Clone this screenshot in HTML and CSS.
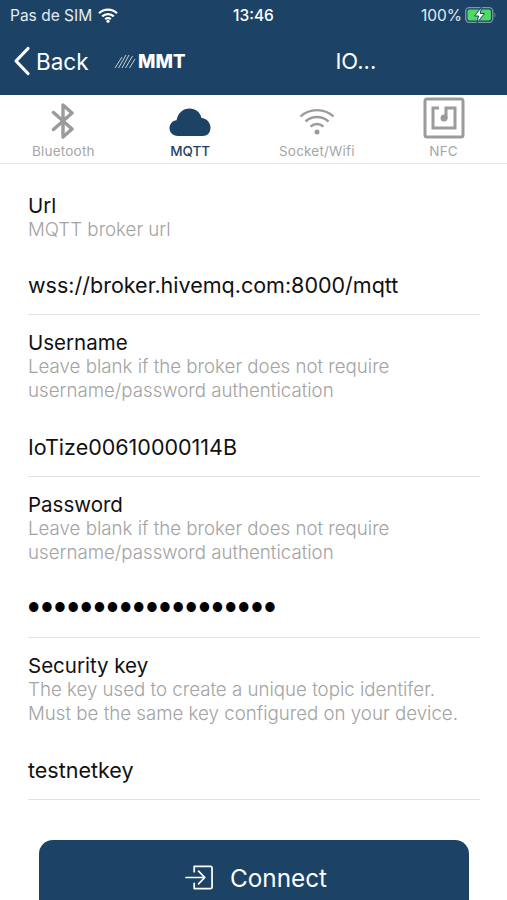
FILE: index.html
```html
<!DOCTYPE html>
<html lang="fr">
<head>
<meta charset="UTF-8">
<meta name="viewport" content="width=device-width, initial-scale=1.0">
<title>MQTT settings</title>
<link rel="stylesheet" href="styles.css">
</head>
<body>

<div class="top">
  <div class="status">
    <div class="status-left">
      <span>Pas de SIM</span>
      <svg class="status-wifi" viewBox="0 0 20 15" width="20" height="15">
        <path d="M1 5.2a13 13 0 0 1 18 0M4.2 8.4a8.4 8.4 0 0 1 11.6 0M7.2 11.2a4 4 0 0 1 5.6 0" fill="none" stroke="#fff" stroke-width="2.2"/>
        <circle cx="10" cy="13.2" r="1.6" fill="#fff"/>
      </svg>
    </div>
    <span class="status-time">13:46</span>
    <div class="status-right">
      <span>100%</span>
      <svg viewBox="0 0 32 16" width="32" height="16">
        <rect x="0.7" y="0.7" width="27" height="14.6" rx="3.5" fill="none" stroke="#7f97a8" stroke-width="1.3"/>
        <rect x="2.5" y="2.5" width="23.4" height="11" rx="2" fill="#4cd964"/>
        <path d="M29.5 5.5c1.2.4 1.2 4.6 0 5z" fill="#7f97a8"/>
        <path d="M16.5 0 9.5 9h4L12 16l7.500-9.500h-4.200z" fill="#fff" stroke="#1c4366" stroke-width="1"/>
      </svg>
    </div>
  </div>
  <div class="navbar">
    <a class="back">
      <svg viewBox="0 0 18 30" width="18" height="30">
        <path d="M15 2.500 3 15l12 12.500" fill="none" stroke="#fff" stroke-width="3.200" stroke-linecap="round" stroke-linejoin="round"/>
      </svg>
      <span>Back</span>
    </a>
    <div class="logo">
      <svg viewBox="0 0 22 16" width="22" height="16">
        <path d="M1 15 8 4M4.500 15 12 2M8 15 15 2M11.500 15 18.500 3M15.500 15 21 6" fill="none" stroke="#c5d2dc" stroke-width="1"/>
      </svg>
      <span>MMT</span>
    </div>
    <div class="nav-title">IO...</div>
  </div>
</div>

<div class="tabs">
  <div class="tab">
    <svg viewBox="0 0 24 36" width="24" height="36">
      <path d="M2.500 9.500 21 26 12 34V2L21 10 2.500 26.500" fill="none" stroke="#9b9b9b" stroke-width="3.400" stroke-linejoin="round" stroke-linecap="round"/>
    </svg>
    <span>Bluetooth</span>
  </div>
  <div class="tab active">
    <svg viewBox="0 0 42 36" width="42" height="36">
      <path d="M9 33C3.500 33 .5 29 .5 25c0-4 3-7.500 7-7.800C9 10 14 5.500 20.500 5.500c6 0 10.500 3.500 12 9.500 5 .3 9 4.500 9 9.500 0 5-3 8.500-8 8.500z" fill="#1c4366"/>
    </svg>
    <span>MQTT</span>
  </div>
  <div class="tab">
    <svg viewBox="0 0 36 36" width="36" height="36">
      <path d="M1.500 13.500C10.500 5 25.500 5 34.500 13.500M6.500 18.500C13 12.500 23 12.500 29.500 18.500M11.500 23.500C15.500 20.500 20.500 20.500 24.500 23.500" fill="none" stroke="#9b9b9b" stroke-width="2.400"/>
      <circle cx="18" cy="29" r="2.500" fill="#9b9b9b"/>
    </svg>
    <span>Socket/Wifi</span>
  </div>
  <div class="tab">
    <svg viewBox="0 0 42 42" width="42" height="42">
      <rect x="2" y="2" width="38" height="38" rx="2" fill="none" stroke="#9b9b9b" stroke-width="3"/>
      <path d="M16 11h-6v20h22V11h-9v11" fill="none" stroke="#9b9b9b" stroke-width="3"/>
      <circle cx="21" cy="21" r="3.500" fill="#9b9b9b"/>
    </svg>
    <span>NFC</span>
  </div>
</div>

<div class="form">
  <div class="field">
    <div class="label">Url</div>
    <div class="hint">MQTT broker url</div>
    <div class="value">wss://broker.hivemq.com:8000/mqtt</div>
  </div>
  <div class="field">
    <div class="label">Username</div>
    <div class="hint">Leave blank if the broker does not require username/password authentication</div>
    <div class="value">IoTize00610000114B</div>
  </div>
  <div class="field">
    <div class="label">Password</div>
    <div class="hint">Leave blank if the broker does not require username/password authentication</div>
    <div class="value dots">&#9679;&#9679;&#9679;&#9679;&#9679;&#9679;&#9679;&#9679;&#9679;&#9679;&#9679;&#9679;&#9679;&#9679;&#9679;&#9679;&#9679;&#9679;&#9679;</div>
  </div>
  <div class="field">
    <div class="label">Security key</div>
    <div class="hint">The key used to create a unique topic identifer.<br>Must be the same key configured on your device.</div>
    <div class="value">testnetkey</div>
  </div>
</div>

<button class="connect">
  <svg viewBox="0 0 30 28" width="29" height="27">
    <path d="M9.500 8V2.500h17a1.500 1.500 0 0 1 1.500 1.500v20a1.500 1.500 0 0 1-1.500 1.500h-17V20" fill="none" stroke="#fff" stroke-width="1.800" stroke-linecap="round" stroke-linejoin="round"/>
    <path d="M1 14h19M14 7.500l6.500 6.500-6.500 6.500" fill="none" stroke="#fff" stroke-width="1.800" stroke-linecap="round" stroke-linejoin="round"/>
  </svg>
  <span>Connect</span>
</button>

</body>
</html>
```

FILE: styles.css
```css
html, body{
    margin:0;
    height:900px;
    overflow:hidden;
}

body{
    font-family:Inter, "Liberation Sans", sans-serif;
    background:white;
    color:#111;
}

.top{
    background:#1c4366;
    color:white;
    height:95px;
}

.status{
    display:grid;
    grid-template-columns:1fr auto 1fr;
    align-items:center;
    height:30px;
    padding:0 10px;
    font-size:15.500px;
}

.status-left, .status-right{
    display:flex;
    align-items:center;
    gap:6px;
    color:#e6ebf0;
}

.status-right{
    gap:3px;
    justify-content:flex-end;
}

.status-time{
    font-weight:500;
}

.navbar{
    display:flex;
    align-items:center;
    height:62px;
    padding:0 0 0 13px;
}

.back{
    display:flex;
    align-items:center;
    gap:5px;
    font-size:22.500px;
    width:101px;
}

.logo{
    display:flex;
    align-items:center;
    gap:2px;
    font-size:18.500px;
    font-weight:800;
}

.nav-title{
    font-size:22px;
    margin-left:150px;
}

.tabs{
    display:grid;
    grid-template-columns:repeat(4, 1fr);
    height:68px;
    border-bottom:1px solid #e6e6e6;
}

.tab{
    display:flex;
    flex-direction:column;
    align-items:center;
    justify-content:flex-end;
    font-size:13.500px;
    letter-spacing:0.200px;
    color:#a6a6a6;
    padding-bottom:4px;
    gap:4px;
}

.tab.active{
    color:#1c4366;
    font-weight:500;
    letter-spacing:0;
}

.form{
    padding:13.500px 27px 0 28px;
}

.field{
    padding-top:16px;
    border-bottom:1px solid #e2e2e2;
}

.label{
    font-size:20.500px;
    line-height:23px;
}

.hint{
    font-size:18.700px;
    line-height:24px;
    padding-top:1px;
    color:#a3a3a3;
    font-weight:300;
}

.value{
    font-size:21.500px;
    line-height:30px;
    padding:28.500px 0 14.170px;
}

.dots{
    letter-spacing:1.700px;
    font-size:12.500px;
    color:#000;
}

.connect{
    display:flex;
    align-items:center;
    justify-content:center;
    gap:16px;
    width:430px;
    height:76px;
    margin:39.500px 0 0 39px;
    padding:0 0 0 4px;
    border:none;
    border-radius:14px;
    background:#1c4366;
    color:white;
    font-family:inherit;
    font-size:24.300px;
}
```
